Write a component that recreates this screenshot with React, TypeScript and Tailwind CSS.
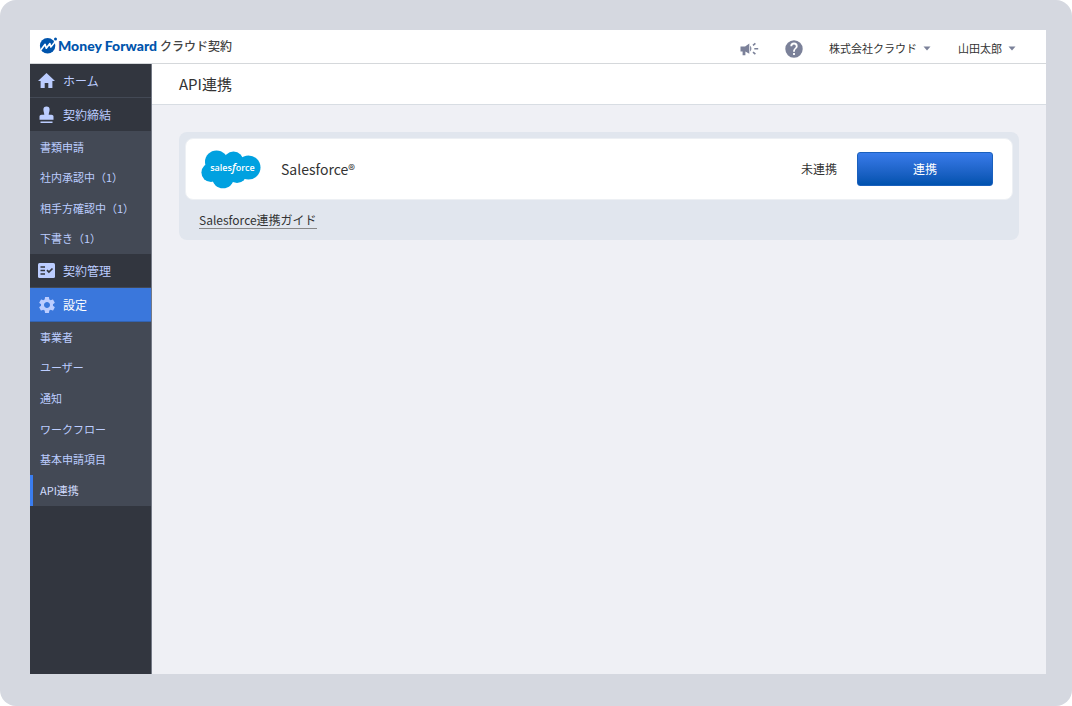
import type { ReactNode } from 'react'

interface SubItem {
  label: string
  active?: boolean
}

function HomeIcon() {
  return (
    <svg width="17" height="17" viewBox="0 0 17 17" fill="currentColor" aria-hidden="true">
      <path d="M8.5 1 17 9h-2.6v7h-4.1v-5H6.7v5H2.6V9H0z" />
    </svg>
  )
}

function StampIcon() {
  return (
    <svg width="17" height="18" viewBox="0 0 17 18" fill="currentColor" aria-hidden="true">
      <path d="M8.5 0.5a3.1 3.1 0 0 1 3.1 3.2c0 1.9-.9 3-.9 5h2.8c1.1 0 2 .8 2 1.8v3.3h-14v-3.3c0-1 .9-1.8 2-1.8h2.8c0-2-.9-3.1-.9-5A3.1 3.1 0 0 1 8.5.5zM2.5 15.4h12V17h-12z" />
    </svg>
  )
}

function ListCheckIcon() {
  return (
    <svg width="17" height="15" viewBox="0 0 17 15" aria-hidden="true">
      <rect width="17" height="15" rx="1.5" fill="currentColor" />
      <path d="M2.5 4h4.5M2.5 7.5h4.5M2.5 11h4.5" stroke="#32363f" strokeWidth="1.7" />
      <path d="m9 7.2 1.9 1.9 3.6-3.6" fill="none" stroke="#32363f" strokeWidth="1.7" />
    </svg>
  )
}

function GearIcon() {
  return (
    <svg width="20" height="20" viewBox="0 0 24 24" fill="currentColor" aria-hidden="true">
      <path d="M19.14 12.94c.04-.3.06-.61.06-.94 0-.32-.02-.64-.07-.94l2.03-1.58c.18-.14.23-.41.12-.61l-1.92-3.32c-.12-.22-.37-.29-.59-.22l-2.39.96c-.5-.38-1.03-.7-1.62-.94l-.36-2.54c-.04-.24-.24-.41-.48-.41h-3.84c-.24 0-.43.17-.47.41l-.36 2.54c-.59.24-1.13.57-1.62.94l-2.39-.96c-.22-.08-.47 0-.59.22L2.74 8.87c-.12.21-.08.47.12.61l2.03 1.58c-.05.3-.09.63-.09.94s.02.64.07.94l-2.03 1.58c-.18.14-.23.41-.12.61l1.92 3.32c.12.22.37.29.59.22l2.39-.96c.5.38 1.03.7 1.62.94l.36 2.54c.05.24.24.41.48.41h3.84c.24 0 .44-.17.47-.41l.36-2.54c.59-.24 1.13-.56 1.62-.94l2.39.96c.22.08.47 0 .59-.22l1.92-3.32c.12-.22.07-.47-.12-.61l-2.01-1.58zM12 15.6c-1.98 0-3.6-1.62-3.6-3.6s1.62-3.6 3.6-3.6 3.6 1.62 3.6 3.6-1.62 3.6-3.6 3.6z" />
    </svg>
  )
}

function MegaphoneIcon() {
  return (
    <svg width="19" height="14" viewBox="0 0 19 14" fill="currentColor" aria-hidden="true">
      <path d="M0.5 4.5h4.6L9.3 1.4v10.4L5.4 9.4v3.9H2.6V9.4H0.5z" />
      <path d="M10.1 3.8c1.7 1 1.7 4.8 0 5.8z" />
      <path d="m13 3.4 2.4-2M14.3 6.7h3.9M13 10.2l2.4 2" stroke="currentColor" strokeWidth="1.6" />
    </svg>
  )
}

function HelpIcon() {
  return (
    <svg width="22" height="22" viewBox="0 0 24 24" fill="currentColor" aria-hidden="true">
      <path d="M12 2.5a9.5 9.5 0 1 0 0 19 9.5 9.5 0 0 0 0-19zm1 16h-2v-2.1h2zm2-7.3-.9.9c-.8.8-1.1 1.4-1.1 2.9h-2v-.5c0-1.1.4-2.1 1.2-2.9l1.2-1.2c.4-.4.6-.9.6-1.4a2 2 0 1 0-4 0H8a4 4 0 1 1 8 0c0 .9-.4 1.7-1 2.2z" />
    </svg>
  )
}

function Caret() {
  return (
    <svg width="8" height="5" viewBox="0 0 8 5" fill="#7b8199" aria-hidden="true">
      <path d="M0.5 0.5h7L4 4.5z" />
    </svg>
  )
}

function LogoMark() {
  return (
    <svg width="19" height="17" viewBox="0 0 19 17" aria-hidden="true">
      <circle cx="8.6" cy="8.8" r="7.7" fill="#0054ac" />
      <path
        d="M2 12.8 6.1 7.3l1.2 4 3.6-4.7.9 3.4 5-6"
        fill="none"
        stroke="#fff"
        strokeWidth="1.6"
        strokeLinejoin="round"
      />
      <circle cx="16.5" cy="2" r="1.5" fill="#0054ac" />
    </svg>
  )
}

function SalesforceLogo() {
  return (
    <svg width="60" height="39" viewBox="0 0 60 39" role="img" aria-label="salesforce">
      <g fill="#00a1e0">
        <circle cx="15.5" cy="12" r="11.5" />
        <circle cx="32.5" cy="11.5" r="10" />
        <circle cx="47.5" cy="17.5" r="12" />
        <circle cx="10" cy="22.5" r="9.6" />
        <circle cx="22" cy="27.5" r="10.8" />
        <circle cx="36" cy="23.5" r="9.6" />
        <path d="M12 10h30v18H12z" />
      </g>
      <text
        x="31.5"
        y="20.5"
        textAnchor="middle"
        fill="#fff"
        fontSize="9"
        fontWeight="600"
        fontFamily="'Open Sans', sans-serif"
      >
        sales<tspan fontStyle="italic" fontSize="11">f</tspan>orce
      </text>
    </svg>
  )
}

function NavItem({ icon, label, active }: { icon: ReactNode; label: string; active?: boolean }) {
  return (
    <a
      href="#"
      className={
        active
          ? 'flex h-[34px] items-center border-b border-[#3263b2] bg-[#3a77dc] text-white'
          : 'flex h-[34px] items-center border-b border-[#434955] bg-[#32363f]'
      }
    >
      <span className="flex w-[33px] justify-center text-[#bccdff]">{icon}</span>
      <span className="text-xs">{label}</span>
    </a>
  )
}

function SubNav({ items, className }: { items: SubItem[]; className: string }) {
  return (
    <ul className={`grid auto-rows-fr bg-[#434955] text-[11px] ${className}`}>
      {items.map((item) => (
        <li key={item.label} className="flex">
          <a
            href="#"
            className={
              item.active
                ? 'flex flex-1 items-center border-l-3 border-[#3a7df0] pb-px pl-[7px] text-[#d3deff]'
                : 'flex flex-1 items-center pb-px pl-2.5'
            }
          >
            {item.label}
          </a>
        </li>
      ))}
    </ul>
  )
}

const contractItems: SubItem[] = [
  { label: '書類申請' },
  { label: '社内承認中（1）' },
  { label: '相手方確認中（1）' },
  { label: '下書き（1）' },
]

const settingItems: SubItem[] = [
  { label: '事業者' },
  { label: 'ユーザー' },
  { label: '通知' },
  { label: 'ワークフロー' },
  { label: '基本申請項目' },
  { label: 'API連携', active: true },
]

function Header() {
  return (
    <header className="flex h-[34px] items-center justify-between border-b border-[#d5d8db] bg-white pr-[30px] pl-[9px]">
      <a href="#" className="flex items-center pb-0.5">
        <LogoMark />
        <span className="font-['Lato'] text-sm font-black text-[#0054ac]">Money Forward</span>
        <span className="ml-[3px] text-xs font-medium text-[#444]">クラウド契約</span>
      </a>
      <div className="flex items-center pt-1 text-[11px]">
        <button type="button" aria-label="お知らせ" className="text-[#7b8199]">
          <MegaphoneIcon />
        </button>
        <button type="button" aria-label="ヘルプ" className="ml-6 text-[#7b8199]">
          <HelpIcon />
        </button>
        <button type="button" className="ml-6 flex items-center gap-1.5">
          株式会社クラウド
          <Caret />
        </button>
        <button type="button" className="ml-[27px] flex items-center gap-1.5">
          山田太郎
          <Caret />
        </button>
      </div>
    </header>
  )
}

function Sidebar() {
  return (
    <nav className="w-[122px] shrink-0 border-r border-[#747985] bg-[#32363f] text-[#bccdff]">
      <NavItem icon={<HomeIcon />} label="ホーム" />
      <NavItem icon={<StampIcon />} label="契約締結" />
      <SubNav items={contractItems} className="h-[122px]" />
      <NavItem icon={<ListCheckIcon />} label="契約管理" />
      <NavItem icon={<GearIcon />} label="設定" active />
      <SubNav items={settingItems} className="h-[184px]" />
    </nav>
  )
}

export default function App() {
  return (
    <div className="min-h-screen bg-white font-['Noto_Sans_CJK_JP',sans-serif] text-[#333]">
      <div className="flex min-h-screen flex-col rounded-2xl bg-[#d5d8e0] pt-[30px] pr-[26px] pb-8 pl-[30px]">
        <div className="flex flex-1 flex-col">
          <Header />
          <div className="flex flex-1">
            <Sidebar />
            <main className="flex-1 bg-[#eff0f5]">
              <div className="flex h-[41px] items-center border-b border-[#d8dde3] bg-white px-[27px]">
                <h1 className="text-[15px]">API連携</h1>
              </div>
              <section className="mx-[27px] mt-[27px] rounded-lg bg-[#e1e6ee] p-1.5">
                <div className="flex h-[62px] items-center rounded-lg border border-[#edf0f4] bg-white pr-[19px] pl-[15px]">
                  <SalesforceLogo />
                  <h2 className="ml-5 flex-1 text-sm">Salesforce®</h2>
                  <span className="text-xs">未連携</span>
                  <button
                    type="button"
                    className="ml-5 h-[34px] w-[136px] rounded-[3px] border border-[#1a60bd] bg-linear-to-b from-[#387bea] to-[#0052ae] text-xs text-white"
                  >
                    連携
                  </button>
                </div>
                <div className="flex px-3.5 pt-3 pb-[5px]">
                  <a href="#" className="border-b border-[#888] text-xs">
                    Salesforce連携ガイド
                  </a>
                </div>
              </section>
            </main>
          </div>
        </div>
      </div>
    </div>
  )
}
